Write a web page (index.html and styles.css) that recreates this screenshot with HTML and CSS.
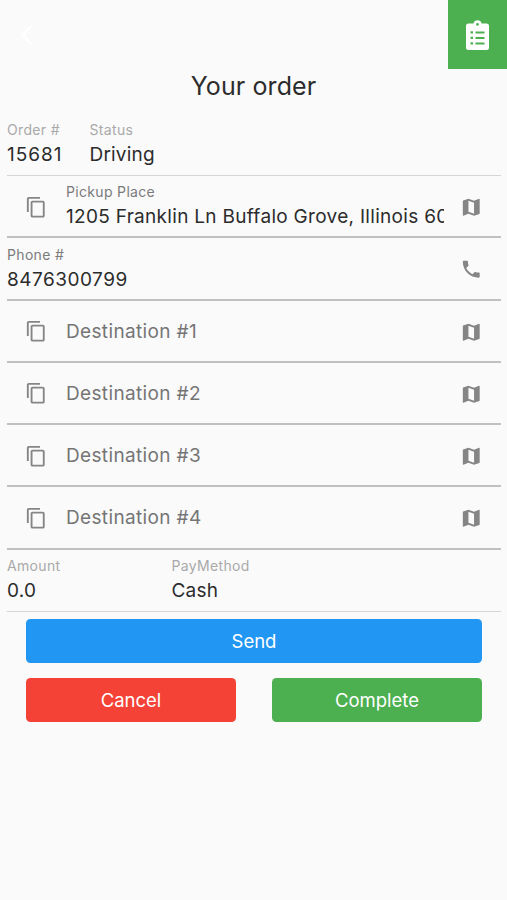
FILE: index.html
```html
<!DOCTYPE html>
<html lang="en">
<head>
<meta charset="utf-8">
<title>Your order</title>
<link rel="stylesheet" href="styles.css">
</head>
<body>
<svg class="defs" aria-hidden="true">
<symbol id="copy" viewBox="0 0 24 24"><path d="M16 1H4c-1.100 0-2 .9-2 2v14h2V3h12V1zm3 4H8c-1.100 0-2 .9-2 2v14c0 1.100.9 2 2 2h11c1.100 0 2-.9 2-2V7c0-1.100-.9-2-2-2zm0 16H8V7h11v14z"/></symbol>
<symbol id="map" viewBox="0 0 24 24"><path d="M20.500 3l-.16.03L15 5.100 9 3 3.360 4.900c-.21.07-.36.25-.36.48V20.500c0 .28.220.5.500.5l.16-.03L9 18.900l6 2.100 5.640-1.900c.21-.07.360-.25.360-.48V3.500c0-.28-.22-.5-.5-.5zM15 19l-6-2.110V5l6 2.110V19z"/></symbol>
<symbol id="phone" viewBox="0 0 24 24"><path d="M6.620 10.790c1.440 2.830 3.760 5.140 6.590 6.590l2.200-2.200c.27-.27.670-.36 1.020-.24 1.120.37 2.330.57 3.570.57.550 0 1 .45 1 1V20c0 .55-.45 1-1 1-9.390 0-17-7.610-17-17 0-.55.450-1 1-1h3.500c.55 0 1 .45 1 1 0 1.250.2 2.450.57 3.570.11.350.030.740-.25 1.020l-2.200 2.200z"/></symbol>
</svg>
<header class="topbar">
  <svg class="back" viewBox="0 0 14 22"><path d="M11 2 3 11l8 9"/></svg>
  <div class="orders"><svg viewBox="0 0 23 30"><path fill-rule="evenodd" d="M2.500 3.500H7.500a4.100 4.100 0 0 1 8 0h5A2.500 2.500 0 0 1 23 6v21.500a2.500 2.500 0 0 1-2.500 2.500h-18A2.500 2.500 0 0 1 0 27.500V6A2.500 2.500 0 0 1 2.500 3.500zm9-.5a1.400 1.400 0 1 0 0 2.800 1.400 1.400 0 0 0 0-2.800zM4.500 11.200v2.400H7v-2.400zm5 .2v2h9v-2zm-5 5.300v2.400H7v-2.400zm5 .2v2h9v-2zm-5 5.300v2.400H7v-2.400zm5 .2v2h9v-2z"/></svg></div>
</header>
<h1>Your order</h1>
<main>
  <section class="row muted">
    <div class="field order"><label>Order #</label><span class="id">15681</span></div>
    <div class="field"><label>Status</label><span>Driving</span></div>
  </section>
  <section class="row">
    <svg class="icon copy"><use href="#copy"/></svg>
    <div class="field grow"><label>Pickup Place</label><span class="address">1205 Franklin Ln Buffalo Grove, Illinois 60089</span></div>
    <svg class="icon end"><use href="#map"/></svg>
  </section>
  <section class="row">
    <div class="field grow"><label>Phone #</label><span class="number">8476300799</span></div>
    <svg class="icon end"><use href="#phone"/></svg>
  </section>
  <section class="row">
    <svg class="icon copy"><use href="#copy"/></svg><span class="hint">Destination #1</span><svg class="icon end"><use href="#map"/></svg>
  </section>
  <section class="row">
    <svg class="icon copy"><use href="#copy"/></svg><span class="hint">Destination #2</span><svg class="icon end"><use href="#map"/></svg>
  </section>
  <section class="row">
    <svg class="icon copy"><use href="#copy"/></svg><span class="hint">Destination #3</span><svg class="icon end"><use href="#map"/></svg>
  </section>
  <section class="row">
    <svg class="icon copy"><use href="#copy"/></svg><span class="hint">Destination #4</span><svg class="icon end"><use href="#map"/></svg>
  </section>
  <section class="row muted">
    <div class="field amount"><label>Amount</label><span>0.0</span></div>
    <div class="field"><label>PayMethod</label><span>Cash</span></div>
  </section>
</main>
<div class="actions">
  <button class="send">Send</button>
  <button class="cancel">Cancel</button>
  <button class="complete">Complete</button>
</div>
</body>
</html>
```
FILE: styles.css
```css
* { box-sizing: border-box; }
body { margin: 0; height: 900px; overflow: hidden; background: #fafafa; color: #2c2c2c; font-family: Inter, "Liberation Sans", sans-serif; }
.defs { display: none; }
.topbar { display: flex; justify-content: space-between; height: 69px; }
.back { width: 14px; height: 22px; margin: 24px 0 0 20px; fill: none; stroke: #fff; stroke-width: 2.5; }
.orders { width: 59px; height: 69px; padding: 20px 0 0 18px; background: #4caf50; }
.orders svg { display: block; width: 23px; height: 30px; fill: #fff; }
h1 { margin: 0; height: 44.750px; line-height: 34px; text-align: center; font-size: 25px; font-weight: 400; letter-spacing: .1px; }
main { padding: 0 6px 0 7px; }
.row { display: flex; height: 62.25px; border-bottom: 2px solid #c0c0c0; }
.row.muted { border-bottom: 1px solid #d5d5d5; }
.icon { flex: none; width: 22.5px; height: 22.5px; fill: #858585; margin-top: 20px; }
.copy { margin-left: 18px; margin-right: 18.5px; margin-top: 19.500px; }
.end { margin-left: 17px; margin-right: 18.5px; }
.grow + .end { margin-left: 16.500px; }
.field { display: flex; flex-direction: column; min-width: 0; padding-top: 7.250px; white-space: nowrap; }
.field label { font-size: 14px; line-height: 18px; letter-spacing: .33px; color: #7b7b7b; }
.muted label { color: #a9a9a9; }
.field span { font-size: 19px; line-height: 24px; margin-top: 4px; letter-spacing: .2px; overflow: hidden; }
.field .number { letter-spacing: .5px; }
.field .id { letter-spacing: 1px; }
.field .address { letter-spacing: .3px; }
.grow { flex: 1; }
.order { width: 82.500px; }
.amount { width: 164.500px; }
.hint { flex: 1; font-size: 19px; line-height: 61px; letter-spacing: .35px; color: #757575; }
.actions { display: grid; grid-template-columns: 210px 210px; justify-content: space-between; row-gap: 15px; padding: 7.250px 25px 0 26px; }
button { height: 44px; padding: 0 0 1px; border: 0; border-radius: 4.500px; color: #fff; font-family: inherit; font-size: 18.500px; letter-spacing: 0; }
.send { grid-column: 1 / 3; background: #2196f3; }
.cancel { background: #f44336; }
.complete { background: #4caf50; }
```
